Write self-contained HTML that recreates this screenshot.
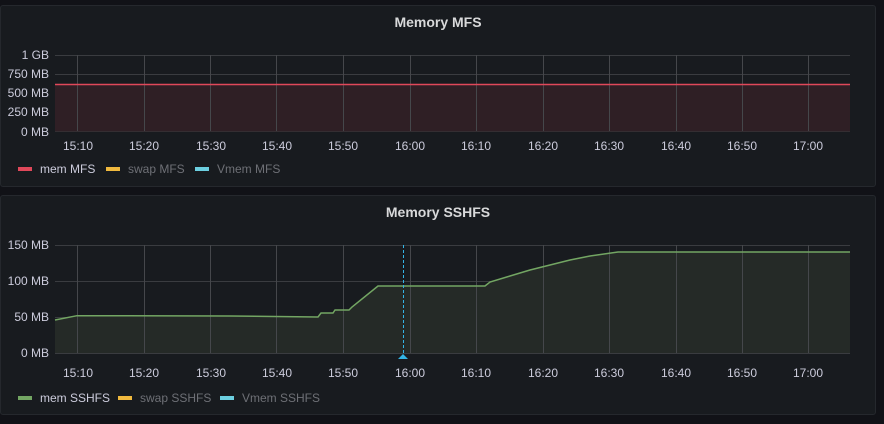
<!DOCTYPE html>
<html><head><style>
body{margin:0;width:884px;height:424px;background:#111217;font-family:"Liberation Sans",sans-serif;overflow:hidden;position:relative}
.p{position:absolute;left:0;width:876px;background:#181b1f;border:1px solid #25282d;border-radius:3px;box-sizing:border-box}
.t{position:absolute;width:100%;text-align:center;color:#d8d9da;font-size:14px;font-weight:bold}
svg{position:absolute;left:0;top:0}
text{font-family:"Liberation Sans",sans-serif;font-size:12px;fill:#ccccdc}
</style></head><body>
<div class="p" style="top:5px;height:182px"><div class="t" style="top:8px">Memory MFS</div></div>
<div class="p" style="top:195px;height:220px"><div class="t" style="top:8px">Memory SSHFS</div></div>
<svg width="884" height="424">
<g stroke="#3a3c40" stroke-width="1">
<line x1="55" x2="850" y1="55.5" y2="55.5"/><line x1="55" x2="850" y1="74.5" y2="74.5"/><line x1="55" x2="850" y1="93.5" y2="93.5"/><line x1="55" x2="850" y1="112.5" y2="112.5"/><line x1="55" x2="850" y1="131.5" y2="131.5"/>
<line x1="55" x2="850" y1="245.5" y2="245.5"/><line x1="55" x2="850" y1="281.5" y2="281.5"/><line x1="55" x2="850" y1="317.5" y2="317.5"/><line x1="55" x2="850" y1="353.5" y2="353.5"/>
</g>
<rect x="55" y="84.5" width="795" height="47" fill="#2f1f25"/>
<polygon points="55,320 77,315.7 230,316 318,317 321,313 333,313 335,310 349,310 352,307 378,286 402,286 485,286 490,282 510,276 530,270 550,265 570,260 590,256 618,252 850,252 850,353 55,353" fill="#252a27"/>
<g stroke="#45474b" stroke-width="1">
<path d="M77.5 55V131M144.5 55V131M210.5 55V131M276.5 55V131M343.5 55V131M410.5 55V131M476.5 55V131M543.5 55V131M609.5 55V131M676.5 55V131M742.5 55V131M808.5 55V131"/>
<path d="M77.5 245V353M144.5 245V353M210.5 245V353M276.5 245V353M343.5 245V353M410.5 245V353M476.5 245V353M543.5 245V353M609.5 245V353M676.5 245V353M742.5 245V353M808.5 245V353"/>
</g>
<line x1="55" x2="850" y1="84.5" y2="84.5" stroke="#e0485a" stroke-width="1.5"/>
<polyline points="55,320 77,315.7 230,316 318,317 321,313 333,313 335,310 349,310 352,307 378,286 402,286 485,286 490,282 510,276 530,270 550,265 570,260 590,256 618,252 850,252" fill="none" stroke="#73a663" stroke-width="1.5"/>
<line x1="403.5" x2="403.5" y1="245" y2="354" stroke="#33b5e5" stroke-dasharray="3,2"/>
<polygon points="398,359 408,359 403,354" fill="#33b5e5"/>
<g text-anchor="end">
<text x="49" y="59">1 GB</text><text x="49" y="78">750 MB</text><text x="49" y="97">500 MB</text><text x="49" y="116">250 MB</text><text x="49" y="136">0 MB</text>
<text x="49" y="249">150 MB</text><text x="49" y="285">100 MB</text><text x="49" y="321">50 MB</text><text x="49" y="357">0 MB</text>
</g>
<g text-anchor="middle">
<text x="78" y="150">15:10</text><text x="144" y="150">15:20</text><text x="211" y="150">15:30</text><text x="277" y="150">15:40</text><text x="343" y="150">15:50</text><text x="410" y="150">16:00</text><text x="476" y="150">16:10</text><text x="543" y="150">16:20</text><text x="609" y="150">16:30</text><text x="676" y="150">16:40</text><text x="742" y="150">16:50</text><text x="808" y="150">17:00</text>
<text x="78" y="377">15:10</text><text x="144" y="377">15:20</text><text x="211" y="377">15:30</text><text x="277" y="377">15:40</text><text x="343" y="377">15:50</text><text x="410" y="377">16:00</text><text x="476" y="377">16:10</text><text x="543" y="377">16:20</text><text x="609" y="377">16:30</text><text x="676" y="377">16:40</text><text x="742" y="377">16:50</text><text x="808" y="377">17:00</text>
</g>
<rect x="18" y="167" width="14" height="4" fill="#e0485a"/><text x="40" y="173">mem MFS</text>
<rect x="106" y="167" width="14" height="4" fill="#f0b93e"/><text x="128" y="173" style="fill:#6e7076">swap MFS</text>
<rect x="195" y="167" width="14" height="4" fill="#6ccfe0"/><text x="217" y="173" style="fill:#6e7076">Vmem MFS</text>
<rect x="18" y="396" width="14" height="4" fill="#73a663"/><text x="40" y="402">mem SSHFS</text>
<rect x="118" y="396" width="14" height="4" fill="#f0b93e"/><text x="140" y="402" style="fill:#6e7076">swap SSHFS</text>
<rect x="220" y="396" width="14" height="4" fill="#6ccfe0"/><text x="242" y="402" style="fill:#6e7076">Vmem SSHFS</text>
</svg>
</body></html>
